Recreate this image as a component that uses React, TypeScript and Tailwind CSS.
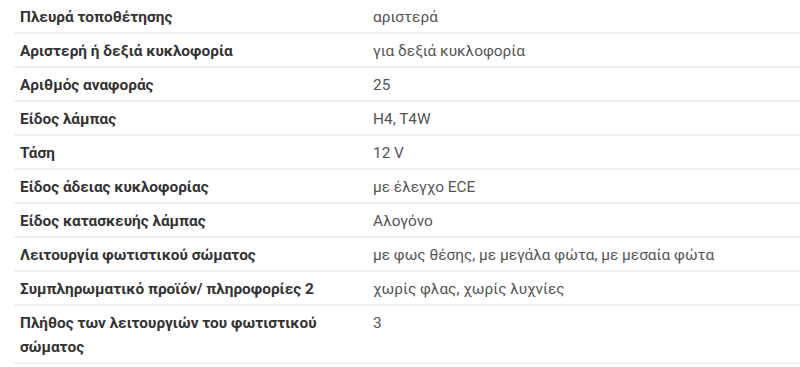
const rows: [string, string][] = [
  ["Πλευρά τοποθέτησης", "αριστερά"],
  ["Αριστερή ή δεξιά κυκλοφορία", "για δεξιά κυκλοφορία"],
  ["Αριθμός αναφοράς", "25"],
  ["Είδος λάμπας", "H4, T4W"],
  ["Τάση", "12 V"],
  ["Είδος άδειας κυκλοφορίας", "με έλεγχο ECE"],
  ["Είδος κατασκευής λάμπας", "Αλογόνο"],
  ["Λειτουργία φωτιστικού σώματος", "με φως θέσης, με μεγάλα φώτα, με μεσαία φώτα"],
  ["Συμπληρωματικό προϊόν/ πληροφορίες 2", "χωρίς φλας, χωρίς λυχνίες"],
  ["Πλήθος των λειτουργιών του φωτιστικού σώματος", "3"],
];

export default function App() {
  return (
    <div className="w-[800px] h-[367px] bg-white overflow-hidden font-['Roboto',sans-serif] text-[15.4px] leading-[24px]">
      <div className="ml-[14px]">
        {rows.map(([label, value]) => (
          <div key={label} className="grid grid-cols-[353px_1fr] border-b-2 border-[#efefef]">
            <div className="pl-[6px] pr-4 pt-[5px] pb-[3px] font-bold text-[#333]">{label}</div>
            <div className="pl-[6px] pt-[5px] pb-[3px] text-[#555]">{value}</div>
          </div>
        ))}
      </div>
    </div>
  );
}
